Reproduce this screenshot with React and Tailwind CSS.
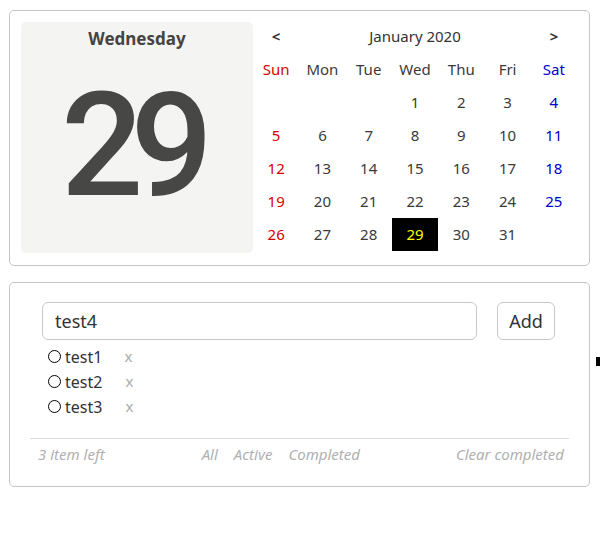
import React from "react";

const days = ["Sun", "Mon", "Tue", "Wed", "Thu", "Fri", "Sat"];

const weeks = [
  [null, null, null, 1, 2, 3, 4],
  [5, 6, 7, 8, 9, 10, 11],
  [12, 13, 14, 15, 16, 17, 18],
  [19, 20, 21, 22, 23, 24, 25],
  [26, 27, 28, 29, 30, 31, null],
];

const todos = [
  { text: "test1", gap: "ml-[22px]" },
  { text: "test2", gap: "ml-[23px]" },
  { text: "test3", gap: "ml-[23px]" },
];

const colorFor = (idx) =>
  idx === 0 ? "text-[#d40000]" : idx === 6 ? "text-[#0000cc]" : "text-[#3a3a3a]";

const App = () => {
  return (
    <div className="relative w-[600px] h-[545px] bg-white font-['Noto_Sans',sans-serif] overflow-hidden">
      {/* Calendar card */}
      <div className="ml-[9px] mt-[10px] w-[581px] h-[256px] border border-[#c4c4c4] rounded-[5px] flex px-[11px] pt-[11px]">
        <div className="w-[232px] h-[231px] bg-[#f4f4f2] rounded-[5px] flex flex-col items-center">
          <div className="mt-[5px] text-[17px] font-bold text-[#444] leading-[24px]">Wednesday</div>
          <div className="mt-[29px] font-['Roboto',sans-serif] text-[145px] leading-[130px] font-medium text-[#474845] tracking-[-13px] pr-[13px]">29</div>
        </div>
        <div className="w-[324px]">
          <div className="h-[31px] pb-[3px] flex items-center justify-between text-[15px] text-[#333]">
            <span className="w-[46px] text-center font-bold">&lt;</span>
            <span>January 2020</span>
            <span className="w-[46px] text-center font-bold">&gt;</span>
          </div>
          <div className="grid grid-cols-7">
            {days.map((d, i) => (
              <div key={d} className={`h-[33px] flex items-center justify-center text-[15px] ${colorFor(i)}`}>
                {d}
              </div>
            ))}
            {weeks.flat().map((n, i) => {
              const col = i % 7;
              const selected = n === 29;
              return (
                <div
                  key={i}
                  className={`h-[33px] flex items-center justify-center text-[15px] ${
                    selected ? "bg-black text-[#ffff00]" : colorFor(col)
                  }`}
                >
                  {n}
                </div>
              );
            })}
          </div>
        </div>
      </div>

      {/* Todo card */}
      <div className="ml-[9px] mt-[16px] w-[581px] h-[205px] border border-[#c4c4c4] rounded-[5px] px-[19px] pt-[19px]">
        <div className="flex gap-[20px] px-[13px]">
          <div className="w-[435px] h-[38px] border border-[#c8c8c8] rounded-[6px] flex items-center px-[12px] text-[18px] text-[#333]">
            test4
          </div>
          <button className="w-[58px] h-[38px] border border-[#c8c8c8] rounded-[6px] text-[18px] text-[#333] bg-white">
            Add
          </button>
        </div>
        <ul className="mt-[4px] pl-[19px] h-[94px]">
          {todos.map((t) => (
            <li key={t.text} className="h-[25px] flex items-center text-[16px] text-[#333]">
              <span className="w-[13px] h-[13px] rounded-full border-[1.5px] border-black mr-[4px]"></span>
              <span>{t.text}</span>
              <span className={`${t.gap} text-[#aaa] text-[15px]`}>x</span>
            </li>
          ))}
        </ul>
        <div className="border-t border-[#dcdcdc] mx-[1px] h-[32px] flex items-center pl-[8px] pr-[5px] text-[15px] italic text-[#b0b0b0]">
          <span>3 item left</span>
          <span className="flex gap-[16px] ml-[97px]">
            <span>All</span>
            <span>Active</span>
            <span>Completed</span>
          </span>
          <span className="ml-auto">Clear completed</span>
        </div>
      </div>

      {/* cursor artifact at right edge */}
      <div className="absolute left-[596px] top-[357px] w-[4px] h-[9px] bg-black"></div>
    </div>
  );
};

export default App;
